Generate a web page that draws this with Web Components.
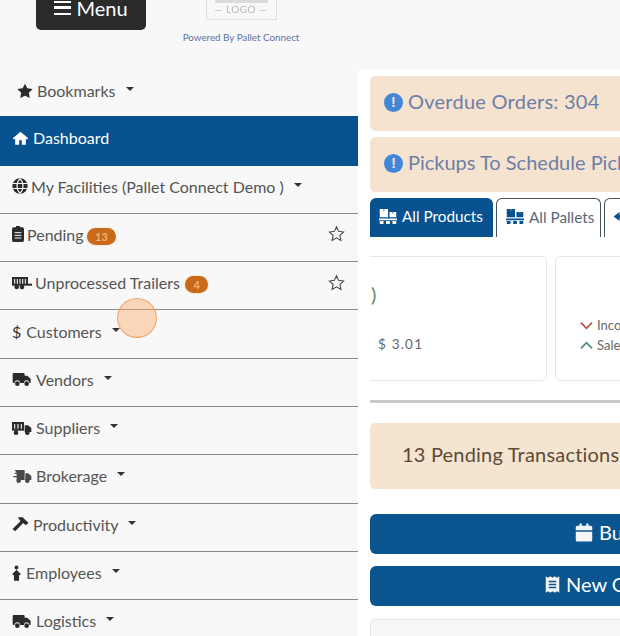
<!DOCTYPE html>
<html>
<head>
<meta charset="utf-8">
<title>Dashboard</title>
<style>
html, body { margin: 0; padding: 0; height: 636px; overflow: hidden; background: #f8f8f8; }
body { font-family: "Lato", "Open Sans", sans-serif; }
</style>
</head>
<body>
<app-shell>
  <top-bar slot="top"></top-bar>
  <side-nav slot="side">
    <nav-item icon="star" caret first>Bookmarks</nav-item>
    <nav-item icon="home" active>Dashboard</nav-item>
    <nav-item icon="globe" caret>My Facilities (Pallet Connect Demo )</nav-item>
    <nav-item icon="clipboard" badge="13" fav>Pending</nav-item>
    <nav-item icon="trailer" badge="4" fav>Unprocessed Trailers</nav-item>
    <nav-item icon="dollar" caret>Customers</nav-item>
    <nav-item icon="truck" caret>Vendors</nav-item>
    <nav-item icon="supply" caret>Suppliers</nav-item>
    <nav-item icon="moving" caret>Brokerage</nav-item>
    <nav-item icon="hammer" caret>Productivity</nav-item>
    <nav-item icon="person" caret>Employees</nav-item>
    <nav-item icon="truck" caret>Logistics</nav-item>
  </side-nav>
  <main-panel slot="main">
    <alert-bar>Overdue Orders: 304</alert-bar>
    <alert-bar style="letter-spacing:0">Pickups To Schedule Pickups To Schedule</alert-bar>
    <tab-row></tab-row>
    <stat-cards></stat-cards>
    <pending-box>13 Pending Transactions</pending-box>
    <action-button icon="calendar" offset="205">Build Schedule</action-button>
    <action-button icon="receipt" offset="175">New Order Now</action-button>
    <div style="height:40px;margin-top:13px;width:420px;border:1px solid #e6e6e6;border-radius:5px;background:#f7f7f7;box-sizing:border-box"></div>
  </main-panel>
</app-shell>
<click-dot></click-dot>

<script>
const ICONS = {
  star: '<svg viewBox="0 0 24 24"><path d="M12 1l3.500 7 8 1.100-5.800 5.500 1.500 8L12 19l-7.200 3.600 1.500-8L.5 9.100l8-1.100z"/></svg>',
  home: '<svg viewBox="0 0 24 24"><path d="M12 2.500L.5 12.500l1.600 1.800L4 12.700V22h6v-6.500h4V22h6v-9.300l1.900 1.600 1.600-1.800z"/></svg>',
  globe: '<svg viewBox="0 0 24 24"><circle cx="12" cy="12" r="11.500"/><path d="M1 8.300h22M1 15.700h22M12 1c-6 6-6 16 0 22M12 1c6 6 6 16 0 22" fill="none" stroke="#f8f8f8" stroke-width="1.700"/></svg>',
  clipboard: '<svg viewBox="0 0 18 24"><path d="M6 0h6v2h3.500A2.500 2.500 0 0 1 18 4.500V21.500A2.500 2.500 0 0 1 15.500 24h-13A2.500 2.500 0 0 1 0 21.500V4.500A2.500 2.500 0 0 1 2.500 2H6z"/><path d="M4 10h10M4 14h10M4 18h10" stroke="#f8f8f8" stroke-width="1.500"/></svg>',
  trailer: '<svg viewBox="0 0 30 24"><path d="M0 3h24v13H0z"/><path d="M4 6v7M8 6v7M12 6v7M16 6v7M20 6v7" stroke="#f8f8f8" stroke-width="1.600"/><path d="M24 13h6v3h-6z"/><circle cx="7" cy="18" r="3.500"/><circle cx="15" cy="18" r="3.500"/></svg>',
  truck: '<svg viewBox="0 0 28 24"><path d="M0 5a2 2 0 0 1 2-2h14a2 2 0 0 1 2 2v2h4l5 5v6h-2a4 4 0 0 0-8 0h-6a4 4 0 0 0-8 0H2a2 2 0 0 1-2-2z"/><circle cx="7" cy="19" r="3.500"/><circle cx="21" cy="19" r="3.500"/></svg>',
  supply: '<svg viewBox="0 0 30 24"><path d="M0 3h18v13H0z"/><path d="M4 6v7M9 6v7M14 6v7" stroke="#f8f8f8" stroke-width="1.600"/><path d="M19 8h5l5 4v6h-10z"/><circle cx="6" cy="19" r="3.500"/><circle cx="23" cy="19" r="3.500"/></svg>',
  moving: '<svg viewBox="0 0 28 24" opacity=".85"><path d="M3 3h15v15H6v-4H1v-2h5V9H3V7h3z"/><path d="M19 8h4l5 4v6h-9z"/><circle cx="9" cy="19" r="3.500"/><circle cx="22" cy="19" r="3.500"/></svg>',
  hammer: '<svg viewBox="0 0 24 24"><path d="M8 2h7l9 8-4 4-4-3.500L4 23l-4-3.500L12 8z"/></svg>',
  person: '<svg viewBox="0 0 14 24"><circle cx="7" cy="3.500" r="3"/><path d="M7 7l7 7-3 1.500V24H3v-8.500L0 14z"/></svg>',
  calendar: '<svg viewBox="0 0 24 24"><path d="M6 0h3v3h6V0h3v3h3a2 2 0 0 1 2 2v4H1V5a2 2 0 0 1 2-2h3zM1 11h22v11a2 2 0 0 1-2 2H3a2 2 0 0 1-2-2z"/></svg>',
  receipt: '<svg viewBox="0 0 20 24"><path d="M1 1l3 2 3-2 3 2 3-2 3 2 3-2v22l-3-2-3 2-3-2-3 2-3-2-3 2z"/><path d="M5 8h10M5 12h10M5 16h10" stroke="#0a5490" stroke-width="1.800"/></svg>',
  pallet: '<svg viewBox="0 0 24 20"><path d="M1 0h11v11H1zM14 4h9v7h-9zM0 12.500h24v2.500H0zM1 16h5v4H1zM9.500 16h5v4h-5zM18 16h5v4h-5z"/><path d="M6.500 0v3M18.500 4v2" stroke="#888" stroke-width="1.500"/></svg>'
};

const shellTpl = document.createElement("template");
shellTpl.innerHTML = `
<style>
:host { display: grid; grid-template-columns: 358px 1fr; grid-template-rows: 70px 566px; width: 620px; height: 636px; overflow: hidden; filter: blur(.4px); }
.top { grid-column: 1 / 3; }
</style>
<div class="top"><slot name="top"></slot></div>
<slot name="side"></slot>
<slot name="main"></slot>`;

class AppShell extends HTMLElement {
  constructor() {
    super();
    this.attachShadow({ mode: "open" }).appendChild(shellTpl.content.cloneNode(true));
  }
}
customElements.define("app-shell", AppShell);

class TopBar extends HTMLElement {
  constructor() {
    super();
    this.attachShadow({ mode: "open" }).innerHTML = `
    <style>
    :host { display: flex; height: 70px; align-items: flex-start; overflow: hidden; background: #f8f8f8; }
    .menu { margin: -10px 0 0 36px; width: 110px; height: 40px; box-sizing: border-box; padding-bottom: 4px; background: #2b2b2b; border-radius: 5px; color: #fff; font-size: 20px; display: flex; justify-content: center; align-items: center; gap: 5px; }
    .bars { width: 17px; height: 14px; border-top: 2.500px solid #fff; border-bottom: 2.500px solid #fff; position: relative; box-sizing: border-box; }
    .bars::after { content: ""; position: absolute; left: 0; right: 0; top: 3px; height: 2.500px; background: #fff; }
    .brand { margin-left: 35px; width: 120px; display: flex; flex-direction: column; align-items: center; }
    .logo { width: 71px; height: 20px; box-sizing: border-box; border: 1px solid #dcdfe2; border-top: 0; color: #b4b8bc; font-size: 10px; text-align: center; line-height: 18px; letter-spacing: .5px; position: relative; }
    .logo::before { content: ""; position: absolute; left: 8px; right: 8px; top: 0; height: 3px; background: #d9dcdf; }
    .by { margin-top: 11px; font-size: 9.800px; line-height: 12px; color: #5d73a3; white-space: nowrap; }
    </style>
    <div class="menu"><span class="bars"></span>Menu</div>
    <div class="brand"><div class="logo">— LOGO —</div><div class="by">Powered By Pallet Connect</div></div>`;
  }
}
customElements.define("top-bar", TopBar);

class SideNav extends HTMLElement {
  constructor() {
    super();
    this.attachShadow({ mode: "open" }).innerHTML = `
    <style>
    :host { display: block; width: 358px; background: #f8f8f8; overflow: hidden; }
    </style>
    <slot></slot>`;
  }
}
customElements.define("side-nav", SideNav);

class NavItem extends HTMLElement {
  constructor() {
    super();
    const root = this.attachShadow({ mode: "open" });
    const icon = this.getAttribute("icon");
    const badge = this.getAttribute("badge");
    const glyph = icon === "dollar" ? '<span class="dollar">$</span>' : `<span class="ic ${icon}">${ICONS[icon]}</span>`;
    root.innerHTML = `
    <style>
    :host { display: flex; align-items: center; box-sizing: border-box; height: 48.300px; padding: 0 13px 6px 12px; border-bottom: 1.500px solid #8a8a8a; color: #555; font-size: 16px; white-space: nowrap; }
    :host([first]) { height: 46px; padding-left: 17px; padding-bottom: 5px; border-bottom: 0; }
    :host([active]) { height: 49.500px; background: #07528f; color: #fff; border-bottom: 0; }
    .ic { display: inline-flex; width: 16px; height: 16px; margin-right: 4px; fill: #2b2b2b; }
    :host([active]) .ic { width: 17px; fill: #fff; }
    .ic svg { width: 100%; height: 100%; }
    .globe { width: 16px; margin-right: 3px; }
    .clipboard { width: 12px; height: 16px; margin-right: 3px; }
    .trailer { width: 20px; margin-right: 3px; }
    .truck, .supply, .moving { width: 20px; margin-right: 4px; }
    .hammer { width: 17px; margin-right: 4px; }
    .person { width: 9px; margin-right: 5px; }
    .dollar { color: #333; font-size: 16px; margin-right: 5px; }
    .caret { width: 0; height: 0; margin-left: 10px; margin-bottom: 3px; border: 4px solid transparent; border-top-color: #333; border-bottom: 0; }
    .badge { margin-left: 3px; padding: 0 8.500px; height: 17px; line-height: 17px; margin-top: 4px; border-radius: 9px; background: #c9691a; color: #f0b27c; font-size: 11px; font-weight: 700; text-align: center; box-shadow: 0 0 2px #f4c99c; }
    :host([badge="4"]) .badge { margin-left: 5px; }
    .fav { margin-left: auto; width: 17px; height: 17px; margin-right: 0; margin-bottom: 1px; fill: none; stroke: #444; stroke-width: 1.500; }
    </style>
    ${glyph}<slot></slot>
    ${badge ? `<span class="badge">${badge}</span>` : ""}
    ${this.hasAttribute("caret") ? '<span class="caret"></span>' : ""}
    ${this.hasAttribute("fav") ? '<svg class="fav" viewBox="0 0 24 24"><path d="M12 2.500l3 6.500 7 .9-5.200 4.800 1.400 7L12 18.200l-6.200 3.500 1.400-7L2 9.900l7-.9z"/></svg>' : ""}`;
  }
}
customElements.define("nav-item", NavItem);

class MainPanel extends HTMLElement {
  constructor() {
    super();
    this.attachShadow({ mode: "open" }).innerHTML = `
    <style>
    :host { display: block; background: #fff; padding: 6px 0 0 12px; overflow: hidden; min-width: 0; }
    </style>
    <slot></slot>`;
  }
}
customElements.define("main-panel", MainPanel);

class AlertBar extends HTMLElement {
  constructor() {
    super();
    this.attachShadow({ mode: "open" }).innerHTML = `
    <style>
    :host { display: flex; align-items: center; gap: 6px; box-sizing: border-box; width: 420px; height: 55px; margin-bottom: 6px; padding: 0 0 6px 13px; background: #f5e3cf; border: 1px solid #f1e6d9; border-radius: 5px; color: #6c7fa8; font-size: 20px; white-space: nowrap; letter-spacing: .25px; }
    i { flex: none; width: 19px; height: 19px; margin-top: 3px; border-radius: 50%; background: #4186d8; color: #f5e3cf; font: 700 14px/19px "Liberation Sans", sans-serif; text-align: center; }
    span { margin-left: -1px; }
    </style>
    <i>!</i><span><slot></slot></span>`;
  }
}
customElements.define("alert-bar", AlertBar);

class TabRow extends HTMLElement {
  constructor() {
    super();
    this.attachShadow({ mode: "open" }).innerHTML = `
    <style>
    :host { display: flex; gap: 3px; height: 39px; color: #444; font-size: 15.300px; white-space: nowrap; }
    div { flex: none; display: flex; align-items: center; gap: 5px; box-sizing: border-box; height: 39px; padding: 0 8px 3px 9px; border-radius: 6px 6px 0 0; }
    svg { width: 18px; height: 15px; fill: #07528f; flex: none; }
    .on { width: 123px; background: #07528f; color: #fff; }
    .on svg { fill: #fff; }
    .off { width: 105px; border: 1.500px solid #44525c; border-bottom: 0; color: #5a6a78; }
    .more { width: 60px; border: 1.500px solid #44525c; border-bottom: 0; padding-left: 7px; }
    </style>
    <div class="on">${ICONS.pallet}All Products</div>
    <div class="off">${ICONS.pallet}All Pallets</div>
    <div class="more"><svg viewBox="0 0 24 20"><path d="M2 10l8-6v4h12v4H10v4z"/></svg></div>`;
  }
}
customElements.define("tab-row", TabRow);

class StatCards extends HTMLElement {
  constructor() {
    super();
    this.attachShadow({ mode: "open" }).innerHTML = `
    <style>
    :host { display: block; margin-top: 19px; height: 147px; border-bottom: 3px solid #c9c9c9; box-sizing: border-box; overflow: hidden; width: 260px; }
    .strip { display: flex; gap: 8px; margin-left: -40px; }
    .card { flex: none; box-sizing: border-box; height: 125px; border: 1.500px solid #e8e8e8; border-radius: 5px; position: relative; display: flex; flex-direction: column; color: #666; font-size: 13px; }
    .a { width: 217px; padding: 22px 0 0 40px; }
    .paren { color: #5b8d5a; font-size: 20px; line-height: 30px; }
    .price { margin: 27px 0 0 7px; letter-spacing: 1.200px; font-size: 13.500px; }
    .b { width: 200px; padding: 58px 0 0 24px; line-height: 20px; }
    .b span { display: flex; align-items: center; gap: 4px; }
    svg { width: 13px; height: 9px; fill: none; stroke-width: 2; }
    </style>
    <div class="strip">
      <div class="card a"><div class="paren">)</div><div class="price">$ 3.01</div></div>
      <div class="card b">
        <span><svg viewBox="0 0 14 9" stroke="#b4554c"><path d="M1 1.500l6 6 6-6"/></svg>Incoming</span>
        <span><svg viewBox="0 0 14 9" stroke="#4a9470"><path d="M1 7.500l6-6 6 6"/></svg>Sales</span>
      </div>
    </div>`;
  }
}
customElements.define("stat-cards", StatCards);

class PendingBox extends HTMLElement {
  constructor() {
    super();
    this.attachShadow({ mode: "open" }).innerHTML = `
    <style>
    :host { display: flex; align-items: center; box-sizing: border-box; width: 420px; height: 66px; margin-top: 20px; padding: 0 0 5px 32px; background: #f5e4d0; border-radius: 5px; color: #5d4a36; font-size: 20px; white-space: nowrap; letter-spacing: .2px; }
    </style>
    <slot></slot>`;
  }
}
customElements.define("pending-box", PendingBox);

class ActionButton extends HTMLElement {
  constructor() {
    super();
    const icon = this.getAttribute("icon");
    this.attachShadow({ mode: "open" }).innerHTML = `
    <style>
    :host { display: flex; align-items: center; gap: 6px; box-sizing: border-box; width: 420px; height: 40px; margin-top: 12px; padding: 0 0 4px ${this.getAttribute("offset")}px; background: #0a5490; border-radius: 6px; color: #fff; font-size: 20px; white-space: nowrap; }
    :host([icon="calendar"]) { margin-top: 25px; }
    svg { height: 19px; fill: #f4f4f4; flex: none; }
    :host([icon="calendar"]) svg { width: 18px; }
    :host([icon="receipt"]) svg { width: 15px; }
    </style>
    ${ICONS[icon]}<slot></slot>`;
  }
}
customElements.define("action-button", ActionButton);

class ClickDot extends HTMLElement {
  constructor() {
    super();
    this.attachShadow({ mode: "open" }).innerHTML = `
    <style>
    :host { position: absolute; left: 117px; top: 298px; width: 40px; height: 40px; box-sizing: border-box; border-radius: 50%; background: rgba(250, 170, 110, .45); border: 1.500px solid rgba(245, 150, 80, .8); }
    </style>`;
  }
}
customElements.define("click-dot", ClickDot);
</script>
</body>
</html>
